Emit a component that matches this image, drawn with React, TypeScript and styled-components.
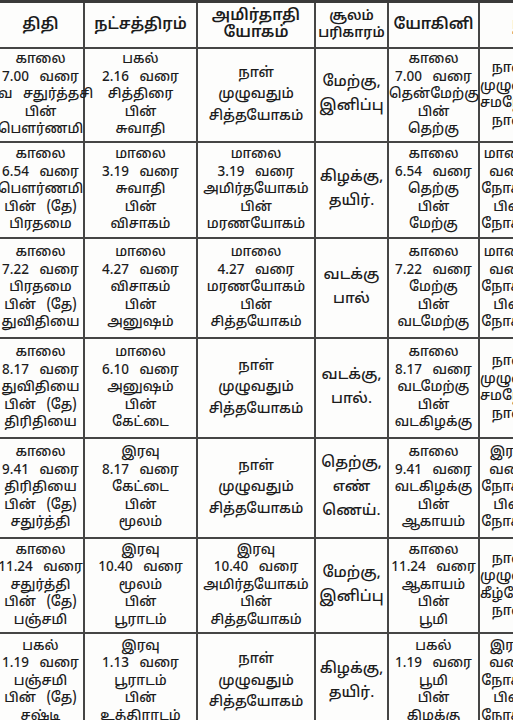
import React from 'react';
import styled, { createGlobalStyle } from 'styled-components';

const GlobalStyle = createGlobalStyle`
  html, body {
    margin: 0;
    padding: 0;
    background: #fdfdfc;
    overflow: hidden;
  }
  body {
    width: 513px;
    height: 720px;
    font-family: "Noto Sans Tamil", "Lohit Tamil", "Noto Serif Tamil", "Noto Sans", "DejaVu Sans", sans-serif;
    color: #1c1c1c;
  }
`;

const Sheet = styled.div`
  width: 513px;
  height: 720px;
  overflow: hidden;
`;

const Table = styled.table`
  margin-left: -4px;
  border-collapse: collapse;
  table-layout: fixed;
  width: 542px;
  border-top: 3px solid #3a3a3a;
`;

const Col = styled.col<{ $w: number }>`
  width: ${({ $w }) => $w}px;
`;

const HeadCell = styled.th<{ $size: number; $indent: number }>`
  height: 44px;
  padding: 0 0 0 ${({ $indent }) => $indent}px;
  border: 2px solid #454545;
  border-top: none;
  font-size: ${({ $size }) => $size}px;
  font-weight: 600;
  line-height: 17px;
  text-align: ${({ $indent }) => ($indent ? 'left' : 'center')};
  vertical-align: middle;
  white-space: nowrap;
  overflow: hidden;
`;

const Row = styled.tr<{ $h: number }>`
  height: ${({ $h }) => $h}px;
`;

const Cell = styled.td<{ $size: number; $lh: number }>`
  padding: 0;
  border: 2px solid #454545;
  font-size: ${({ $size }) => $size}px;
  font-weight: 500;
  line-height: ${({ $lh }) => $lh}px;
  text-align: center;
  vertical-align: middle;
  white-space: nowrap;
  word-spacing: 7px;
`;

const Line = styled.div`
  display: block;
`;

const cols = [87, 113, 118, 73, 91, 60];

const headers: { lines: string[]; size: number; indent: number }[] = [
  { lines: ['திதி'], size: 15.5, indent: 0 },
  { lines: ['நட்சத்திரம்'], size: 15.5, indent: 0 },
  { lines: ['அமிர்தாதி', 'யோகம்'], size: 15.5, indent: 0 },
  { lines: ['சூலம்', 'பரிகாரம்'], size: 13.5, indent: 0 },
  { lines: ['யோகினி'], size: 15.5, indent: 0 },
  { lines: ['நாள்'], size: 15.5, indent: 32 },
];

const rows: { h: number; cells: string[][] }[] = [
  {
    h: 94,
    cells: [
      ['காலை', '7.00 வரை', 'வ சதுர்த்தசி', 'பின்', 'பௌர்ணமி'],
      ['பகல்', '2.16 வரை', 'சித்திரை', 'பின்', 'சுவாதி'],
      ['நாள்', 'முழுவதும்', 'சித்தயோகம்'],
      ['மேற்கு,', 'இனிப்பு'],
      ['காலை', '7.00 வரை', 'தென்மேற்கு', 'பின்', 'தெற்கு'],
      ['நாள்', 'முழுவதும்', 'சமநோக்கு', 'நாள்'],
    ],
  },
  {
    h: 96,
    cells: [
      ['காலை', '6.54 வரை', 'பௌர்ணமி', 'பின் (தே)', 'பிரதமை'],
      ['மாலை', '3.19 வரை', 'சுவாதி', 'பின்', 'விசாகம்'],
      ['மாலை', '3.19 வரை', 'அமிர்தயோகம்', 'பின்', 'மரணயோகம்'],
      ['கிழக்கு,', 'தயிர்.'],
      ['காலை', '6.54 வரை', 'தெற்கு', 'பின்', 'மேற்கு'],
      ['மாலை', 'வரை', 'நோக்கு', 'பின்', 'நோக்கு'],
    ],
  },
  {
    h: 100,
    cells: [
      ['காலை', '7.22 வரை', 'பிரதமை', 'பின் (தே)', 'துவிதியை'],
      ['மாலை', '4.27 வரை', 'விசாகம்', 'பின்', 'அனுஷம்'],
      ['மாலை', '4.27 வரை', 'மரணயோகம்', 'பின்', 'சித்தயோகம்'],
      ['வடக்கு', 'பால்'],
      ['காலை', '7.22 வரை', 'மேற்கு', 'பின்', 'வடமேற்கு'],
      ['மாலை', 'வரை', 'நோக்கு', 'பின்', 'நோக்கு'],
    ],
  },
  {
    h: 100,
    cells: [
      ['காலை', '8.17 வரை', 'துவிதியை', 'பின் (தே)', 'திரிதியை'],
      ['மாலை', '6.10 வரை', 'அனுஷம்', 'பின்', 'கேட்டை'],
      ['நாள்', 'முழுவதும்', 'சித்தயோகம்'],
      ['வடக்கு,', 'பால்.'],
      ['காலை', '8.17 வரை', 'வடமேற்கு', 'பின்', 'வடகிழக்கு'],
      ['நாள்', 'முழுவதும்', 'சமநோக்கு', 'நாள்'],
    ],
  },
  {
    h: 100,
    cells: [
      ['காலை', '9.41 வரை', 'திரிதியை', 'பின் (தே)', 'சதுர்த்தி'],
      ['இரவு', '8.17 வரை', 'கேட்டை', 'பின்', 'மூலம்'],
      ['நாள்', 'முழுவதும்', 'சித்தயோகம்'],
      ['தெற்கு,', 'எண்', 'ணெய்.'],
      ['காலை', '9.41 வரை', 'வடகிழக்கு', 'பின்', 'ஆகாயம்'],
      ['இரவு', 'வரை', 'நோக்கு', 'பின்', 'நோக்கு'],
    ],
  },
  {
    h: 95,
    cells: [
      ['காலை', '11.24 வரை', 'சதுர்த்தி', 'பின் (தே)', 'பஞ்சமி'],
      ['இரவு', '10.40 வரை', 'மூலம்', 'பின்', 'பூராடம்'],
      ['இரவு', '10.40 வரை', 'அமிர்தயோகம்', 'பின்', 'சித்தயோகம்'],
      ['மேற்கு,', 'இனிப்பு'],
      ['காலை', '11.24 வரை', 'ஆகாயம்', 'பின்', 'பூமி'],
      ['நாள்', 'முழுவதும்', 'கீழ்நோக்கு', 'நாள்'],
    ],
  },
  {
    h: 97,
    cells: [
      ['பகல்', '1.19 வரை', 'பஞ்சமி', 'பின் (தே)', 'சஷ்டி'],
      ['இரவு', '1.13 வரை', 'பூராடம்', 'பின்', 'உத்திராடம்'],
      ['நாள்', 'முழுவதும்', 'சித்தயோகம்'],
      ['கிழக்கு,', 'தயிர்.'],
      ['பகல்', '1.19 வரை', 'பூமி', 'பின்', 'கிழக்கு'],
      ['இரவு', 'வரை', 'நோக்கு', 'பின்', 'நோக்கு'],
    ],
  },
];

// soolam column is set larger and looser; three-line cells get more air
const cellMetrics = (col: number, count: number) => {
  if (col === 3) return { size: 15, lh: 24 };
  if (count === 3) return { size: 14, lh: 21.5 };
  return { size: 13.5, lh: 17.5 };
};

const App: React.FC = () => {
  return (
    <Sheet>
      <GlobalStyle />
      <Table>
        <colgroup>
          {cols.map((w, i) => (
            <Col key={i} $w={w} />
          ))}
        </colgroup>
        <thead>
          <tr>
            {headers.map((h, i) => (
              <HeadCell key={i} $size={h.size} $indent={h.indent}>
                {h.lines.map((l) => (
                  <Line key={l}>{l}</Line>
                ))}
              </HeadCell>
            ))}
          </tr>
        </thead>
        <tbody>
          {rows.map((row, r) => (
            <Row key={r} $h={row.h}>
              {row.cells.map((lines, c) => {
                const m = cellMetrics(c, lines.length);
                return (
                  <Cell key={c} $size={m.size} $lh={m.lh}>
                    {lines.map((l, k) => (
                      <Line key={k}>{l}</Line>
                    ))}
                  </Cell>
                );
              })}
            </Row>
          ))}
        </tbody>
      </Table>
    </Sheet>
  );
};

export default App;
